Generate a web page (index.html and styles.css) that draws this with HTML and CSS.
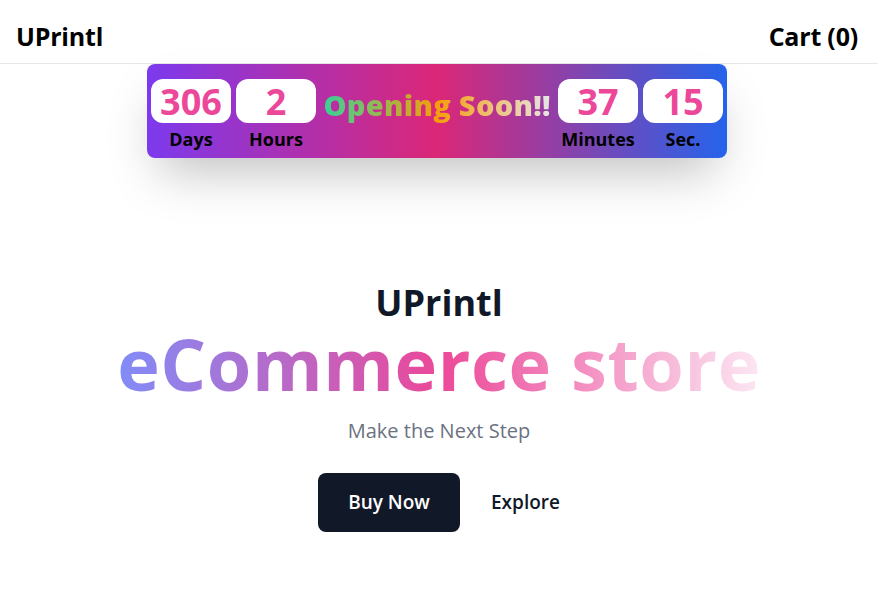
FILE: index.html
```html
<!DOCTYPE html>
<html lang="en">
<head>
<meta charset="utf-8">
<title>UPrintl</title>
<link rel="stylesheet" href="styles.css">
</head>
<body>
<header class="topbar">
  <div class="brand">UPrintl</div>
  <div class="cart">Cart (0)</div>
</header>
<section class="countdown">
  <div class="unit">
    <div class="num">306</div>
    <div class="label">Days</div>
  </div>
  <div class="unit">
    <div class="num">2</div>
    <div class="label">Hours</div>
  </div>
  <div class="soon">Opening Soon!!</div>
  <div class="unit">
    <div class="num">37</div>
    <div class="label">Minutes</div>
  </div>
  <div class="unit">
    <div class="num">15</div>
    <div class="label">Sec.</div>
  </div>
</section>
<main class="hero">
  <h2 class="hero-brand">UPrintl</h2>
  <h1 class="hero-title">eCommerce store</h1>
  <p class="hero-sub">Make the Next Step</p>
  <div class="actions">
    <a class="btn-primary" href="#">Buy Now</a>
    <a class="btn-link" href="#">Explore</a>
  </div>
</main>
</body>
</html>
```
FILE: styles.css
```css
* { box-sizing: border-box; }
html, body { margin: 0; padding: 0; background: #fff; }
body {
  font-family: "Open Sans", "Noto Sans", sans-serif;
  color: #000;
}
.topbar {
  height: 64px;
  display: flex;
  align-items: center;
  justify-content: space-between;
  padding: 8px 20px 0 16px;
  border-bottom: 1px solid #e5e7eb;
}
.brand, .cart {
  font-size: 25px;
  font-weight: 700;
  letter-spacing: -0.2px;
}
.countdown {
  width: 580px;
  margin: 0 auto;
  position: relative;
  left: -2px;
  display: flex;
  align-items: flex-start;
  gap: 5px;
  padding: 15px 4px 3px;
  border-radius: 8px;
  background: linear-gradient(to right, #7c3aed, #db2777, #2563eb);
  box-shadow: 0 25px 50px -12px rgba(0,0,0,0.25);
}
.unit {
  display: flex;
  flex-direction: column;
  align-items: center;
  width: 80px;
}
.num {
  width: 80px;
  height: 44px;
  background: #fff;
  border-radius: 12px;
  color: #ec4899;
  font-size: 36px;
  font-weight: 700;
  line-height: 46px;
  text-align: center;
}
.label {
  font-size: 18px;
  font-weight: 700;
  line-height: 32px;
  color: #000;
}
.soon {
  flex: 1;
  height: 48px;
  line-height: 52px;
  text-align: center;
  font-size: 29px;
  font-weight: 800;
  letter-spacing: 0.3px;
  background: linear-gradient(to right, #34d399, #f59e0b, #e5e7eb);
  -webkit-background-clip: text;
  background-clip: text;
  color: transparent;
  white-space: nowrap;
}
.hero {
  display: flex;
  flex-direction: column;
  align-items: center;
  padding-top: 123px;
}
.hero-brand {
  margin: 0;
  font-size: 36px;
  font-weight: 700;
  line-height: 44px;
  color: #111827;
}
.hero-title {
  margin: 0;
  font-size: 72px;
  font-weight: 700;
  line-height: 76px;
  letter-spacing: 0.6px;
  background: linear-gradient(to right, #818cf8, #ec4899, #fce7f3);
  -webkit-background-clip: text;
  background-clip: text;
  color: transparent;
}
.hero-sub {
  margin: 16px 0 0;
  font-size: 20px;
  line-height: 28px;
  color: #6b7280;
}
.actions {
  margin-top: 28px;
  display: flex;
  align-items: center;
  gap: 26px;
  padding-left: 5px;
}
.btn-primary {
  display: block;
  width: 142px;
  height: 59px;
  line-height: 59px;
  text-align: center;
  background: #111827;
  color: #fff;
  border-radius: 8px;
  font-size: 19px;
  font-weight: 600;
  text-decoration: none;
}
.btn-link {
  display: block;
  padding: 0 5px;
  line-height: 59px;
  color: #111827;
  font-size: 19px;
  font-weight: 600;
  text-decoration: none;
}
```
